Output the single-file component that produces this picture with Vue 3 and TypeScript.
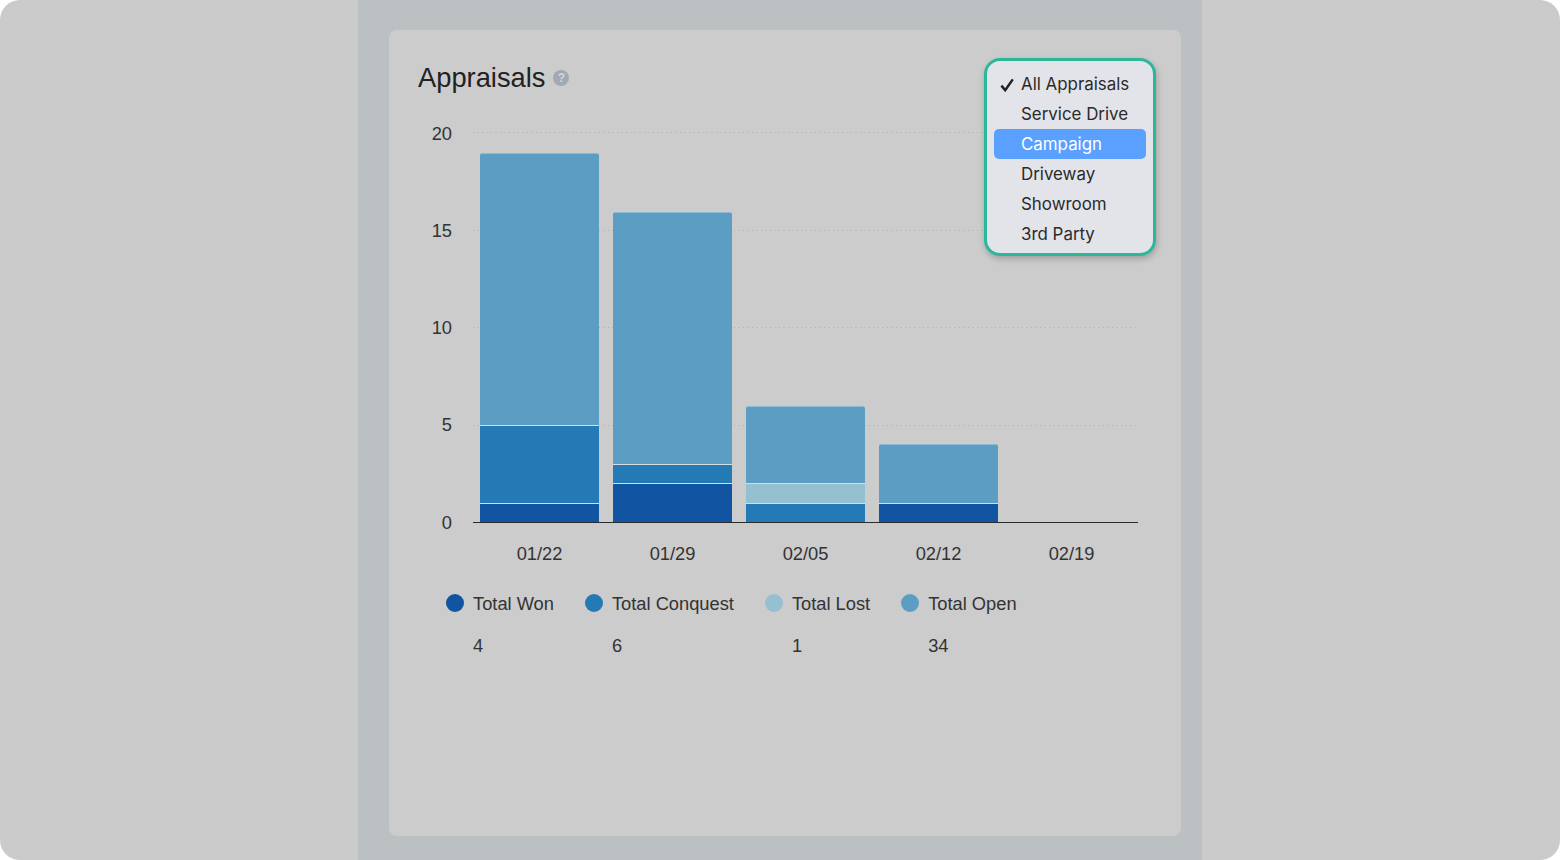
<script setup lang="ts">
interface Seg { key: string; value: number }
const unit = 19.4
const series = [
  { key: 'won', label: 'Total Won', total: 4 },
  { key: 'conquest', label: 'Total Conquest', total: 6 },
  { key: 'lost', label: 'Total Lost', total: 1 },
  { key: 'open', label: 'Total Open', total: 34 },
]
const weeks: { label: string; segs: Seg[] }[] = [
  { label: '01/22', segs: [{ key: 'open', value: 14 }, { key: 'conquest', value: 4 }, { key: 'won', value: 1 }] },
  { label: '01/29', segs: [{ key: 'open', value: 13 }, { key: 'conquest', value: 1 }, { key: 'won', value: 2 }] },
  { label: '02/05', segs: [{ key: 'open', value: 4 }, { key: 'lost', value: 1 }, { key: 'conquest', value: 1 }] },
  { label: '02/12', segs: [{ key: 'open', value: 3 }, { key: 'won', value: 1 }] },
  { label: '02/19', segs: [] },
]
const ticks = [20, 15, 10, 5, 0]
const options = ['All Appraisals', 'Service Drive', 'Campaign', 'Driveway', 'Showroom', '3rd Party']
</script>

<template>
  <div class="frame">
    <main class="column">
      <section class="card">
        <header class="head">
          <h1 class="title">Appraisals</h1>
          <span class="help">?</span>
        </header>

        <div class="chart">
          <div class="yaxis">
            <span v-for="t in ticks" :key="t" class="tick">{{ t }}</span>
          </div>
          <div class="plotwrap">
            <div class="plot">
              <div class="grid">
                <div v-for="t in 4" :key="t" class="gridline"></div>
              </div>
              <div v-for="w in weeks" :key="w.label" class="slot">
                <div class="bar">
                  <div
                    v-for="s in w.segs"
                    :key="s.key"
                    class="seg"
                    :class="s.key"
                    :style="{ height: s.value * unit + 'px' }"
                  ></div>
                </div>
              </div>
            </div>
            <div class="xaxis">
              <span v-for="w in weeks" :key="w.label" class="xlabel">{{ w.label }}</span>
            </div>
          </div>
        </div>

        <div class="legend">
          <div v-for="s in series" :key="s.key" class="item">
            <span class="dot" :class="s.key"></span>
            <span class="name">{{ s.label }}</span>
            <span class="total">{{ s.total }}</span>
          </div>
        </div>

        <div class="menu">
          <div
            v-for="(o, i) in options"
            :key="o"
            class="option"
            :class="{ active: o === 'Campaign' }"
          >
            <svg v-if="i === 0" class="check" viewBox="0 0 14 14" width="14" height="14">
              <path d="M1.4 7.6 L5.2 12.2 L12.8 1.4" fill="none" stroke="#222" stroke-width="2.5" />
            </svg>
            {{ o }}
          </div>
        </div>
      </section>
    </main>
  </div>
</template>

<style scoped>
.frame {
  width: 1560px;
  height: 860px;
  background: #cbcbcb;
  border-radius: 20px;
  overflow: hidden;
  display: flex;
  justify-content: center;
  font-family: "Liberation Sans", Arial, sans-serif;
  color: #333;
}
.column {
  width: 844px;
  height: 860px;
  box-sizing: border-box;
  background: #bbc0c3;
  padding: 30px 21px 24px 31px;
}
.card {
  position: relative;
  height: 806px;
  box-sizing: border-box;
  background: #cccccc;
  border-radius: 8px;
  padding: 32px 0 0 29px;
}
.head {
  display: flex;
  align-items: center;
  gap: 8px;
  height: 32px;
}
.title {
  margin: 0;
  font-size: 27.3px;
  font-weight: 400;
  line-height: 32px;
  color: #222;
}
.help {
  width: 16px;
  height: 16px;
  border-radius: 50%;
  background: #a3a9b3;
  color: #d4d6da;
  font-size: 12px;
  font-weight: 700;
  line-height: 16px;
  text-align: center;
}
.chart {
  display: flex;
  margin-top: 40px;
}
.yaxis {
  width: 34px;
  height: 408.5px;
  display: flex;
  flex-direction: column;
  justify-content: space-between;
  align-items: flex-end;
  margin-top: -10px;
  font-size: 18.3px;
  line-height: 20px;
}
.tick {
  height: 20px;
  display: block;
}
.plotwrap {
  margin-left: 21px;
  width: 665px;
}
.plot {
  position: relative;
  height: 388px;
  display: flex;
  align-items: flex-end;
  border-bottom: 1px solid #2b2b2b;
}
.grid {
  position: absolute;
  inset: -2px 0 0 0;
  display: flex;
  flex-direction: column;
}
.gridline {
  height: 97.5px;
  background-image: linear-gradient(to right, #adadad 1px, transparent 1px);
  background-size: 4.5px 1px;
  background-repeat: repeat-x;
  background-position: 0 0;
}
.slot {
  position: relative;
  flex: 1;
  display: flex;
  justify-content: center;
}
.bar {
  width: 119.6px;
  display: flex;
  flex-direction: column;
  border-radius: 3px 3px 0 0;
  overflow: hidden;
}
.seg {
  box-sizing: border-box;
  border-top: 1px solid #d3dde2;
}
.seg:first-child {
  border-top-color: #8ebbd4;
}
.won { background: #1054a2; }
.conquest { background: #247ab5; }
.lost { background: #95c0cf; }
.open { background: #5b9dc3; }
.xaxis {
  display: flex;
  margin-top: 20px;
}
.xlabel {
  flex: 1;
  text-align: center;
  font-size: 18.3px;
  line-height: 22px;
}
.legend {
  display: flex;
  gap: 31px;
  margin: 27px 0 0 28px;
}
.item {
  display: grid;
  grid-template-columns: 18px auto;
  column-gap: 9px;
  row-gap: 19px;
  align-items: start;
  font-size: 18.3px;
  line-height: 22px;
}
.dot {
  width: 18px;
  height: 18px;
  margin-top: 2px;
  border-radius: 50%;
}
.name,
.total {
  padding-top: 1px;
}
.total {
  grid-column: 2;
}
.menu {
  position: absolute;
  top: 28px;
  right: 25px;
  width: 172px;
  height: 198px;
  box-sizing: border-box;
  padding: 8px 7px;
  background: #e3e4ea;
  border: 3px solid #2bb89a;
  border-radius: 16px;
  box-shadow: 1px 3px 6px rgba(0, 0, 0, 0.22);
  font-family: Inter, "Liberation Sans", sans-serif;
  font-size: 16.9px;
  color: #2a2a2a;
}
.option {
  position: relative;
  height: 30px;
  line-height: 31px;
  padding-left: 27px;
  border-radius: 5px;
  white-space: nowrap;
}
.option.active {
  background: #5aa0ff;
  color: #fff;
}
.check {
  position: absolute;
  left: 6px;
  top: 9px;
}
</style>

<style>
html, body {
  margin: 0;
  background: #fff;
}
</style>
